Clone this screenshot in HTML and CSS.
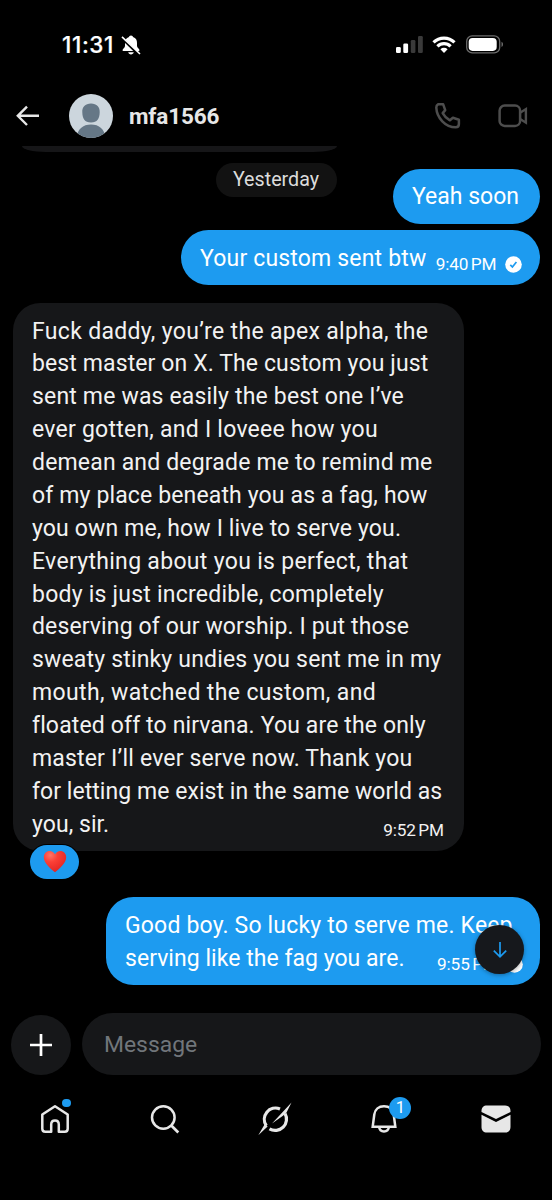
FILE: index.html
```html
<!DOCTYPE html>
<html lang="en">
<head>
<meta charset="utf-8">
<title>Messages</title>
<link rel="stylesheet" href="styles.css">
</head>
<body>
<div class="phone">
  <div class="status">
    <span class="clock">11:31</span>
    <svg class="mute" width="20" height="22" viewBox="0 0 20 22"><path d="M10 1.500c-1.300 0-1.900.8-2 1.500C5 4 4 6.300 4 9v3c0 1.800-2.500 3-2.500 4.300 0 .5.3.7.8.7h15.400c.5 0 .8-.2.8-.7 0-1.300-2.500-2.500-2.500-4.300V9c0-2.700-1-5-4-6-.1-.7-.7-1.500-2-1.500zM7.200 18.300c.4 1.300 1.500 2.200 2.800 2.200s2.400-.9 2.800-2.200z" fill="#fff"/><path d="M.8 4 18 20.800" stroke="#000" stroke-width="2.600"/><path d="M1 2.800 19 20" stroke="#fff" stroke-width="1.600"/></svg>
    <svg class="signal" width="28" height="18" viewBox="0 0 28 18"><rect x="0" y="11" width="4.800" height="6" rx="1.300" fill="#fff"/><rect x="7.300" y="7.500" width="4.800" height="9.500" rx="1.300" fill="#fff"/><rect x="14.800" y="4" width="4.600" height="13" rx="1.300" fill="#3a3a3a"/><rect x="22" y="0" width="4.800" height="17" rx="1.300" fill="#3a3a3a"/></svg>
    <svg class="wifi" width="24" height="18" viewBox="0 0 24 18"><g fill="none" stroke="#fff" stroke-width="3.200"><path d="M1.500 6.400a15 15 0 0 1 21 0"/><path d="M5.400 10.400a9.400 9.400 0 0 1 13.200 0"/></g><path d="M8.400 13.300a5.100 5.100 0 0 1 7.200 0L12 17z" fill="#fff"/></svg>
    <svg class="battery" width="38" height="19" viewBox="0 0 38 19"><rect x=".7" y=".9" width="33" height="17" rx="5.500" fill="none" stroke="#6b6b6b" stroke-width="1.300"/><rect x="2.700" y="2.900" width="28" height="13" rx="3.800" fill="#fff"/><path d="M35.500 6.800c2 .8 2 4.400 0 5.200z" fill="#6b6b6b"/></svg>
  </div>

  <header class="header">
    <svg class="back" width="24" height="22" viewBox="0 0 24 22"><path d="M11 1.700 1.800 10.800 11 20M2 10.800h21" fill="none" stroke="#e7e7e7" stroke-width="2.400"/></svg>
    <svg class="avatar" width="44" height="44" viewBox="0 0 44 44"><defs><clipPath id="disc"><circle cx="22" cy="22" r="22"/></clipPath></defs><g clip-path="url(#disc)"><path fill="#ccd6dd" d="M0 0h44v44H0z"/><path d="M22 9.500c-5.800 0-9 3.700-8.700 8.700.1 6.200 2.400 10.300 8.700 10.300s8.600-4.100 8.700-10.300c.3-5-2.900-8.700-8.700-8.700z" fill="#657786"/><path d="M8 44c0-9 6-13.500 14-13.500S36 35 36 44z" fill="#657786"/></g></svg>
    <h1 class="name">mfa1566</h1>
    <svg class="call" width="26" height="26" viewBox="0 0 26 26"><path d="M3 1.300h5.200l2 5.800-2.500 3c1.600 3.100 4 5.500 7.200 7.200l3-2.500 6 2v4.200c0 2-1.300 3.300-3.200 3.300C10.500 24.300 1.700 14.800 1.300 4.600c0-1.400.5-2.600 1.700-3.300z" fill="none" stroke="#4d4d4d" stroke-width="2.500" stroke-linejoin="round"/></svg>
    <svg class="video" width="30" height="24" viewBox="0 0 30 24"><rect x="1.600" y="1.600" width="20.500" height="20.300" rx="5" fill="none" stroke="#4d4d4d" stroke-width="2.500"/><path d="m22.500 8.500 5.400-3.400v13.600l-5.400-3.400" fill="none" stroke="#4d4d4d" stroke-width="2.400"/></svg>
  </header>

  <main class="thread">
    <div class="earlier"></div>
    <div class="day">Yesterday</div>
    <div class="bubble out short"><p class="text"><span>Yeah soon</span></p></div>
    <div class="bubble out custom">
      <p class="text"><span>Your custom sent btw</span></p>
      <span class="time">9:40 PM</span>
      <svg class="check" width="17" height="17" viewBox="0 0 17 17"><circle cx="8.500" cy="8.500" r="8.300" fill="#fff"/><path d="m5.300 8.900 2.100 2.100 4-5" fill="none" stroke="#1d9bf0" stroke-width="1.700"/></svg>
    </div>
    <div class="bubble in">
      <p class="text long"><span>Fuck daddy, you’re the apex alpha, the</span><span>best master on X. The custom you just</span><span>sent me was easily the best one I’ve</span><span>ever gotten, and I loveee how you</span><span>demean and degrade me to remind me</span><span>of my place beneath you as a fag, how</span><span>you own me, how I live to serve you.</span><span>Everything about you is perfect, that</span><span>body is just incredible, completely</span><span>deserving of our worship. I put those</span><span>sweaty stinky undies you sent me in my</span><span>mouth, watched the custom, and</span><span>floated off to nirvana. You are the only</span><span>master I’ll ever serve now. Thank you</span><span>for letting me exist in the same world as</span><span>you, sir.</span></p>
      <span class="time">9:52 PM</span>
      <div class="reaction"><svg width="24" height="23" viewBox="0 0 24 23"><defs><radialGradient id="heart" cx=".3" cy=".2" r=".9"><stop offset="0" stop-color="#ff7568"/><stop offset=".35" stop-color="#fb4036"/><stop offset="1" stop-color="#df2020"/></radialGradient></defs><path d="M12 22.300C8 19 .8 13.500.8 7.300.8 3.600 3.400 1 6.700 1 9 1 11 2.300 12 4.400 13 2.300 15 1 17.300 1c3.300 0 5.900 2.600 5.900 6.300C23.200 13.500 16 19 12 22.300z" fill="url(#heart)"/></svg></div>
    </div>
    <div class="bubble out reply">
      <p class="text"><span>Good boy. So lucky to serve me. Keep</span><span>serving like the fag you are.</span></p>
      <span class="time">9:55 PM</span>
      <svg class="check" width="17" height="17" viewBox="0 0 17 17"><circle cx="8.500" cy="8.500" r="8.300" fill="#fff"/><path d="m5.300 8.900 2.100 2.100 4-5" fill="none" stroke="#1d9bf0" stroke-width="1.700"/></svg>
      <div class="jump"><svg width="16" height="18" viewBox="0 0 16 18"><path d="M8 1v14.500M1.800 9.600 8 15.800l6.200-6.200" fill="none" stroke="#1d9bf0" stroke-width="1.700"/></svg></div>
    </div>
  </main>

  <div class="composer">
    <div class="add"><svg width="24" height="24" viewBox="0 0 24 24"><path d="M12 1v22M1 12h22" stroke="#fff" stroke-width="2.700"/></svg></div>
    <div class="input">Message</div>
  </div>

  <nav class="tabs">
    <div class="tab"><svg width="30" height="30" viewBox="0 0 30 30"><path d="M15 2.300 2.300 10.500v14.200c0 2 1 3 3 3h5.900v-7.200c0-2.300 1.500-3.900 3.800-3.900s3.800 1.600 3.800 3.900v7.200h5.900c2 0 3-1 3-3V10.500z" fill="none" stroke="#e7e7e7" stroke-width="2.500" stroke-linejoin="round"/></svg><i class="dot"></i></div>
    <div class="tab"><svg width="30" height="30" viewBox="0 0 30 30"><circle cx="13.300" cy="13.500" r="11.300" fill="none" stroke="#e7e7e7" stroke-width="2.500"/><path d="m21.300 21.500 7 7" stroke="#e7e7e7" stroke-width="2.700"/></svg></div>
    <div class="tab"><svg width="34" height="34" viewBox="0 0 34 34"><g fill="none" stroke="#e7e7e7" stroke-width="3.200"><path d="M8.300 23.700A11.300 11.300 0 0 1 22 6.900"/><path d="M27 11.500A11.300 11.300 0 0 1 11.500 26.900"/></g><path d="M33.500.5 14 21.500l11-7.800 3.500-3.200zM.3 33.300 9.600 24.500l-2.500-3z" fill="#e7e7e7"/></svg></div>
    <div class="tab bell"><svg width="28" height="30" viewBox="0 0 28 30"><path d="M2.700 22.700 4.300 10.500C5 5.300 8.800 2.300 14 2.300s9 3 9.700 8.200l1.600 12.200z" fill="none" stroke="#e7e7e7" stroke-width="2.500"/><path d="M9 22.700c.4 3 2.300 4.800 5 4.800s4.600-1.800 5-4.800" fill="none" stroke="#e7e7e7" stroke-width="2.500"/></svg><b class="badge">1</b></div>
    <div class="tab"><svg width="30" height="28" viewBox="0 0 30 28"><path d="M.5 7V6c0-3.500 2-5.500 5.500-5.500h18c3.500 0 5.500 2 5.500 5.500v1L15 14z" fill="#e7e7e7"/><path d="M.5 9.800 15 16.900l14.500-7.100V22c0 3.500-2 5.500-5.500 5.500H6C2.500 27.500.5 25.500.5 22z" fill="#e7e7e7"/></svg></div>
  </nav>
</div>
</body>
</html>
```
FILE: styles.css
```css
* { box-sizing: border-box; }
body { margin: 0; background: #000; font-family: Roboto, "Liberation Sans", sans-serif; color: #f2f2f2; }
.phone { width: 552px; height: 1200px; display: flex; flex-direction: column; overflow: hidden; background: #000; }
svg { display: block; flex: none; }

.status { height: 87px; display: flex; align-items: flex-start; padding: 31px 0 0 62px; color: #fff; }
.clock { width: 55px; font: 500 22.500px/27px Inter, sans-serif; letter-spacing: 0.6px; -webkit-text-stroke: 0.2px #fff; white-space: nowrap; }
.mute { margin: 3px 0 0 4px; }
.signal { margin: 5px 0 0 255px; }
.wifi { margin: 5px 0 0 8px; }
.battery { margin: 4px 0 0 10px; }

.header { height: 58.500px; display: flex; align-items: center; padding: 0 24px 1px 16px; }
.avatar { margin-left: 28.500px; }
.name { flex: 1; margin: 0 0 0 16.500px; font: 700 22.500px/30px Roboto, sans-serif; letter-spacing: -0.15px; color: #e7e7e7; }
.video { margin-left: 37px; }

.thread { height: 854.500px; display: flex; flex-direction: column; align-items: flex-end; padding: 0 12.500px 0 12px; }
.earlier { align-self: flex-start; width: 315px; height: 6px; margin-left: 10px; background: #161618; border-radius: 0 0 24px 24px / 0 0 6px 6px; }
.day { align-self: flex-start; width: 121px; height: 34px; margin: 11px 0 -28px 203.500px; border-radius: 17px; background: #121212; color: #dcdcdc; font-size: 19.700px; line-height: 34px; text-align: center; }
.bubble { position: relative; display: flex; align-items: flex-end; padding: 12.500px 19.500px 9.500px; border-radius: 27.500px; }
.out { background: #1d9bf0; color: #fff; }
.in { align-self: flex-start; width: 451px; height: 548px; margin: 18px 0 0 0.500px; background: #161719; justify-content: space-between; }
.text { margin: 0; font-size: 23px; line-height: 32.870px; white-space: nowrap; letter-spacing: 0.17px; }
.text span { display: block; }
.time { margin-bottom: 2px; font-size: 17.200px; line-height: 20px; white-space: nowrap; letter-spacing: -0.1px; word-spacing: -1.700px; }
.short { width: 147px; height: 55px; }
.short .text { letter-spacing: 0; }
.custom { width: 359px; height: 55px; margin-top: 6.500px; padding-right: 18px; }
.custom .time { margin-left: auto; margin-right: 8px; }
.check { margin-bottom: 2.500px; }
.in .time { margin-left: auto; }
.long { width: 0; }
.long span:nth-child(1) { letter-spacing: 0.32px; }
.long span:nth-child(2) { letter-spacing: 0.11px; }
.long span:nth-child(4) { letter-spacing: 0.24px; }
.long span:nth-child(6), .long span:nth-child(7), .long span:nth-child(13) { letter-spacing: 0.14px; }
.long span:nth-child(8) { letter-spacing: 0.31px; }
.long span:nth-child(9) { letter-spacing: 0.23px; }
.long span:nth-child(10) { letter-spacing: 0.12px; }
.long span:nth-child(12) { letter-spacing: 0.37px; }
.long span:nth-child(n+15) { letter-spacing: 0.05px; }

.reaction { position: absolute; left: 17.500px; bottom: -27.500px; width: 49px; height: 34px; display: grid; place-items: center; border-radius: 17px; background: #1d9bf0; box-shadow: 0 0 0 1px #000; }
.reply { width: 434px; height: 88px; margin-top: 46px; padding-right: 18px; }
.reply .text { width: 312px; }
.reply .text span + span { letter-spacing: 0.04px; }
.reply .time { margin-right: 8px; }
.jump { position: absolute; right: 15.500px; top: 28px; width: 49px; height: 49px; display: grid; place-items: center; border-radius: 50%; background: #16181c; box-shadow: 0 1px 4px rgba(0, 0, 0, 0.35); }

.composer { height: 88px; display: flex; align-items: flex-start; gap: 11px; padding: 13px 11px 0; }
.add { width: 60px; height: 60px; margin-top: 1.500px; display: grid; place-items: center; border-radius: 50%; background: #161719; }
.input { flex: 1; height: 62px; padding-left: 22px; border-radius: 31px; background: #161719; color: #71767b; font-size: 22.900px; line-height: 63px; }

.tabs { display: flex; justify-content: space-between; align-items: center; height: 62px; padding: 0 38.500px 0 37px; }
.tab { position: relative; width: 36px; height: 36px; display: grid; place-items: center; }
.bell { left: -1px; }
.dot { position: absolute; left: 25px; top: -2.500px; width: 8.500px; height: 8.500px; border-radius: 50%; background: #1d9bf0; }
.badge { position: absolute; left: 23px; top: -4px; width: 22px; height: 22px; border-radius: 50%; background: #1d9bf0; color: #fff; font: 400 16.500px/22px Roboto, sans-serif; text-align: center; }
```
